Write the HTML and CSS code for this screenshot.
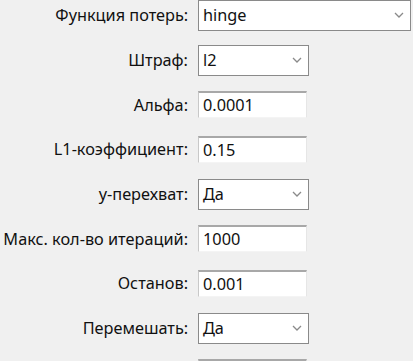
FILE: index.html
```html
<!DOCTYPE html>
<html lang="ru">
<head>
<meta charset="utf-8">
<link rel="stylesheet" href="styles.css">
</head>
<body>
<div class="form">
  <div class="row"><label class="lbl">Функция потерь:</label><div class="combo wide"><span>hinge</span><svg class="chev" viewBox="0 0 10 6"><path d="M1 1l4 4 4-4"/></svg></div></div>
  <div class="row"><label class="lbl">Штраф:</label><div class="combo"><span>l2</span><svg class="chev" viewBox="0 0 10 6"><path d="M1 1l4 4 4-4"/></svg></div></div>
  <div class="row"><label class="lbl">Альфа:</label><div class="field">0.0001</div></div>
  <div class="row"><label class="lbl">L1-коэффициент:</label><div class="field">0.15</div></div>
  <div class="row"><label class="lbl">y-перехват:</label><div class="combo"><span>Да</span><svg class="chev" viewBox="0 0 10 6"><path d="M1 1l4 4 4-4"/></svg></div></div>
  <div class="row"><label class="lbl">Макс. кол-во итераций:</label><div class="field">1000</div></div>
  <div class="row"><label class="lbl">Останов:</label><div class="field">0.001</div></div>
  <div class="row"><label class="lbl">Перемешать:</label><div class="combo"><span>Да</span><svg class="chev" viewBox="0 0 10 6"><path d="M1 1l4 4 4-4"/></svg></div></div>
  <div class="row"><label class="lbl"></label><div class="field"></div></div>
</div>
</body>
</html>
```
FILE: styles.css
```css
html, body {
  margin: 0;
  padding: 0;
  background: #f0f0f0;
  overflow: hidden;
}
body {
  font-family: "Noto Sans", "Open Sans", sans-serif;
  font-size: 16.3px;
  color: #111;
}
.form {
  display: flex;
  flex-direction: column;
  margin-top: -7px;
  height: 368px;
  overflow: hidden;
}
.row {
  height: 44.7px;
  flex: none;
  display: flex;
  align-items: center;
}
.lbl {
  width: 198px;
  flex: none;
  text-align: right;
  white-space: nowrap;
  padding-right: 10px;
  box-sizing: border-box;
  display: flex;
  justify-content: flex-end;
}
.combo {
  position: relative;
  box-sizing: border-box;
  width: 111px;
  height: 31px;
  background: #fff;
  border: 1px solid #8a8a8a;
  display: flex;
  align-items: center;
  padding-left: 4px;
}
.combo.wide {
  width: 213px;
}
.chev {
  position: absolute;
  right: 6px;
  top: 50%;
  width: 10px;
  height: 6px;
  margin-top: -3px;
  fill: none;
  stroke: #8a8a8a;
  stroke-width: 1.3;
}
.field {
  box-sizing: border-box;
  width: 109px;
  height: 27px;
  background: #fff;
  border-top: 2px solid #a8a8a8;
  border-left: 1px solid #c8c8c8;
  border-right: 1px solid #e6e6e6;
  border-bottom: 1px solid #f4f4f4;
  display: flex;
  align-items: center;
  padding-left: 4px;
}
```
